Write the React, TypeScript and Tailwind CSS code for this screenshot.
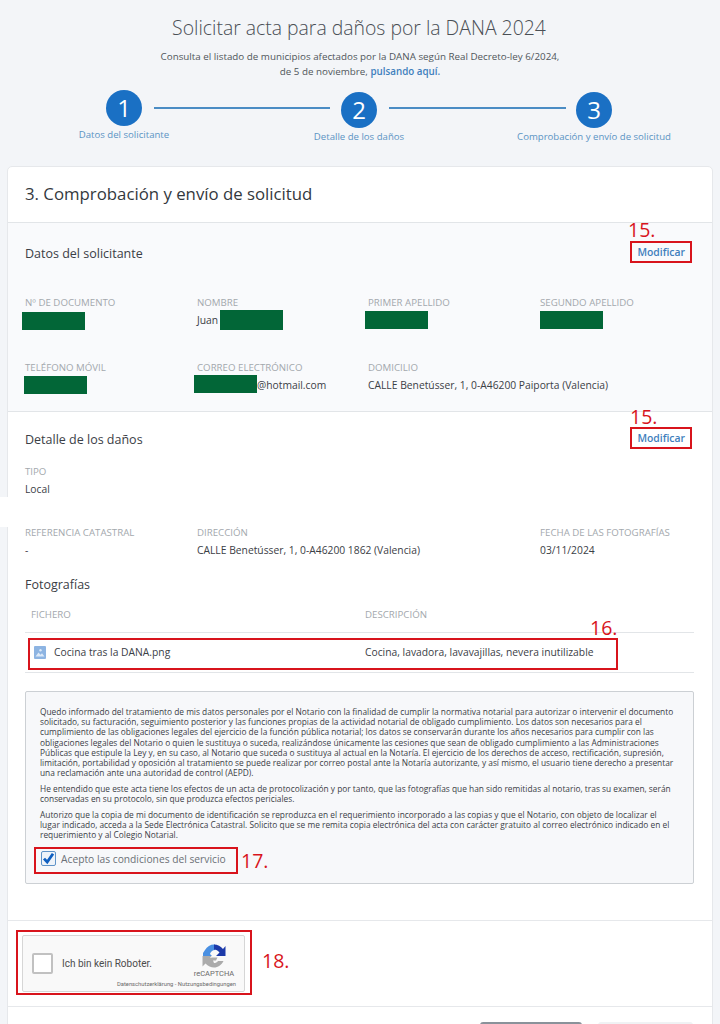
import React from "react";

const L = ({ children }: { children: React.ReactNode }) => (
  <div className="text-[9.7px] leading-[12px] font-medium uppercase text-[#a3a8ad] whitespace-nowrap">{children}</div>
);
const V = ({ children }: { children?: React.ReactNode }) => (
  <div className="mt-[4px] text-[10.3px] leading-[14px] text-[#3b4046] whitespace-nowrap h-[14px]">{children}</div>
);
const F = ({ l, v }: { l: string; v?: React.ReactNode }) => (
  <div>
    <L>{l}</L>
    <V>{v}</V>
  </div>
);

const Step = ({ n, label, up }: { n: number; label: string; up?: boolean }) => (
  <div className={`flex flex-col items-center w-[180px] ${up ? "" : "mt-[2px]"}`}>
    <div className="w-9 h-9 rounded-full bg-[#1a70c4] text-white flex items-center justify-center text-[24px]">{n}</div>
    <div className="mt-[2px] text-[9.6px] leading-[14px] text-[#5b94c4] whitespace-nowrap">{label}</div>
  </div>
);

const Box = ({ c }: { c: string }) => <div className={`absolute border-2 border-[#d8141c] ${c}`} />;
const Num = ({ c, t }: { c: string; t: string }) => (
  <div className={`absolute text-[#d8141c] leading-none text-[19.5px] ${c}`}>{t}</div>
);
const G = ({ c }: { c: string }) => <div className={`absolute bg-[#026637] w-[63px] h-[18px] ${c}`} />;

const p1 = [
  "Quedo informado del tratamiento de mis datos personales por el Notario con la finalidad de cumplir la normativa notarial para autorizar o intervenir el documento",
  "solicitado, su facturación, seguimiento posterior y las funciones propias de la actividad notarial de obligado cumplimiento. Los datos son necesarios para el",
  "cumplimiento de las obligaciones legales del ejercicio de la función pública notarial; los datos se conservarán durante los años necesarios para cumplir con las",
  "obligaciones legales del Notario o quien le sustituya o suceda, realizándose únicamente las cesiones que sean de obligado cumplimiento a las Administraciones",
  "Públicas que estipule la Ley y, en su caso, al Notario que suceda o sustituya al actual en la Notaría. El ejercicio de los derechos de acceso, rectificación, supresión,",
  "limitación, portabilidad y oposición al tratamiento se puede realizar por correo postal ante la Notaría autorizante, y así mismo, el usuario tiene derecho a presentar",
  "una reclamación ante una autoridad de control (AEPD).",
];
const p2 = [
  "He entendido que este acta tiene los efectos de un acta de protocolización y por tanto, que las fotografías que han sido remitidas al notario, tras su examen, serán",
  "conservadas en su protocolo, sin que produzca efectos periciales.",
];
const p3 = [
  "Autorizo que la copia de mi documento de identificación se reproduzca en el requerimiento incorporado a las copias y que el Notario, con objeto de localizar el",
  "lugar indicado, acceda a la Sede Electrónica Catastral. Solicito que se me remita copia electrónica del acta con carácter gratuito al correo electrónico indicado en el",
  "requerimiento y al Colegio Notarial.",
];
const Para = ({ lines, c }: { lines: string[]; c?: string }) => (
  <div className={c}>
    {lines.map((t) => (
      <div key={t} className="whitespace-nowrap">{t}</div>
    ))}
  </div>
);

export default function App() {
  return (
    <div className="relative h-[1024px] w-[720px] overflow-hidden bg-[#f3f5f8] font-['Open_Sans',sans-serif]">
      <div className="h-[166px] flex flex-col items-center">
        <h1 className="mt-[14px] text-[19.4px] leading-[27px] font-light text-[#4a4f55] -ml-[2px]">Solicitar acta para daños por la DANA 2024</h1>
        <p className="mt-[9px] text-[9.8px] leading-[14.5px] text-[#50555b] text-center">
          Consulta el listado de municipios afectados por la DANA según Real Decreto-ley 6/2024,
          <br />
          de 5 de noviembre, <span className="font-semibold text-[#3f7fbd]">pulsando aquí.</span>
        </p>
        <div className="mt-[11px] w-[720px] flex items-start pl-[34px]">
          <Step n={1} label="Datos del solicitante" up />
          <div className="mt-[17px] h-[2px] w-[176px] bg-[#4a8cc4] -ml-[60px] shrink-0" />
          <div className="-ml-[61px]"><Step n={2} label="Detalle de los daños" /></div>
          <div className="mt-[17px] h-[2px] w-[177px] bg-[#4a8cc4] -ml-[60px] shrink-0" />
          <div className="-ml-[62px]"><Step n={3} label="Comprobación y envío de solicitud" /></div>
        </div>
      </div>

      <div className="ml-[7px] w-[706px] bg-white border border-[#e6e8eb] rounded-t-[5px] h-[900px]">
        <div className="h-[56px] flex items-center pl-[17px] border-b border-[#e2e5e8]">
          <h2 className="text-[16.8px] text-[#33383d] leading-none">3. Comprobación y envío de solicitud</h2>
        </div>

        <section className="h-[189px] bg-[#f9fafc] border-b border-[#e2e5e8] pl-[17px] pr-[27px]">
          <div className="flex justify-between items-center pt-[22px]">
            <h3 className="text-[12.5px] leading-[17px] text-[#3b4046]">Datos del solicitante</h3>
            <a className="text-[10.4px] font-semibold text-[#3f7fbd] leading-[14px] -mt-[3px]">Modificar</a>
          </div>
          <div className="mt-[35px] grid grid-cols-[172px_171px_172px_1fr]">
            <F l="Nº de documento" />
            <F l="Nombre" v="Juan" />
            <F l="Primer apellido" />
            <F l="Segundo apellido" />
          </div>
          <div className="mt-[35px] grid grid-cols-[172px_171px_1fr]">
            <F l="Teléfono móvil" />
            <F l="Correo electrónico" v={<span className="pl-[60px]">@hotmail.com</span>} />
            <F l="Domicilio" v="CALLE Benetússer, 1, 0-A46200 Paiporta (Valencia)" />
          </div>
        </section>

        <section className="pl-[17px] pr-[18px]">
          <div className="flex justify-between items-center pt-[19px] pr-[9px]">
            <h3 className="text-[12.5px] leading-[17px] text-[#3b4046]">Detalle de los daños</h3>
            <a className="text-[10.4px] font-semibold text-[#3f7fbd] leading-[14px] -mt-[3px]">Modificar</a>
          </div>
          <div className="mt-[18px]">
            <F l="Tipo" v="Local" />
          </div>
          <div className="mt-[31px] grid grid-cols-[172px_343px_1fr]">
            <F l="Referencia catastral" v="-" />
            <F l="Dirección" v="CALLE Benetússer, 1, 0-A46200 1862 (Valencia)" />
            <F l="Fecha de las fotografías" v="03/11/2024" />
          </div>
          <h3 className="mt-[19px] text-[12.5px] leading-[17px] text-[#3b4046]">Fotografías</h3>
          <div className="mt-[16px] h-[24px] grid grid-cols-[334px_1fr] pl-[6px] border-b border-[#e2e5e8]">
            <L>Fichero</L>
            <L>Descripción</L>
          </div>
          <div className="h-[40px] grid grid-cols-[334px_1fr] items-center pl-[6px] border-b border-[#e2e5e8] text-[10.3px] text-[#3b4046]">
            <div className="flex items-center gap-[8px] pl-[3px]">
              <svg width="12" height="13" viewBox="0 0 12 13" className="shrink-0">
                <rect width="12" height="13" rx="1" fill="#8db4e2" />
                <path d="M1.5 10.5 L4.5 6.5 L6.5 8.8 L8 7.3 L10.5 10.5 Z" fill="#dce9f8" />
                <circle cx="6.5" cy="4.2" r="1.2" fill="#dce9f8" />
              </svg>
              <span>Cocina tras la DANA.png</span>
            </div>
            <div className="whitespace-nowrap">Cocina, lavadora, lavavajillas, nevera inutilizable</div>
          </div>

          <div className="mt-[18px] h-[193px] bg-[#f7f8fa] border border-[#ccd0d4] rounded-[2px] pl-[14px] pt-[15px] text-[8.35px] leading-[10.2px] text-[#3b4046]">
            <Para lines={p1} />
            <Para lines={p2} c="mt-[5.5px]" />
            <Para lines={p3} c="mt-[5.5px]" />
            <label className="mt-[11px] flex items-center gap-[5px] pl-[1px]">
              <span className="w-[15px] h-[15px] rounded-[2px] bg-[#eef3f9] border border-[#5f93c8] flex items-center justify-center shrink-0">
                <svg width="13" height="13" viewBox="0 0 13 13"><path d="M2 6.6 L5.2 10 L11 1.8" stroke="#0f5fc0" strokeWidth="2.8" fill="none" /></svg>
              </span>
              <span className="text-[10.25px] leading-[14px] text-[#6b7076]">Acepto las condiciones del servicio</span>
            </label>
          </div>
        </section>

        <div className="mt-[36px] h-[87px] border-t border-b border-[#e6e8eb] pl-[14px] pt-[14px]">
          <div className="relative w-[223px] h-[57px] bg-[#f9f9f9] border border-[#d6d6d6] rounded-[2px] flex items-center pl-[9px]">
            <div className="w-[21px] h-[21px] bg-white border-2 border-[#c1c1c1] rounded-[2px]" />
            <div className="ml-[9px] text-[10px] text-[#4c4c4c] font-['Roboto',sans-serif]">Ich bin kein Roboter.</div>
            <div className="absolute right-[8px] top-[8px] flex flex-col items-center w-[44px]">
              <svg width="24" height="24" viewBox="0 0 24 24">
                <path d="M3 6 C5 2.5 8.5 0.5 12 0.5 L13 0.5 L13 6 C10.5 6 8.5 8 8 10 L10 12 L1 12 L1 9 Z" fill="#4a90e2" />
                <path d="M12 0.5 C15.5 0.5 19 2.5 21 5 L23.5 2 V12 H14 L17.5 8.5 C16 6.5 14 5.5 12 5.5 Z" fill="#1c3aa9" />
                <path d="M0.5 12 V22.5 L3.5 19.5 C6 22 9 23.5 12 23.5 C16 23.5 19.5 21 21.5 17 H16 C15 18.5 13.5 19 12 19 L11 16.5 H14 L15.5 13.5 H10 L8 14 L9.5 12 Z" fill="#ababab" />
              </svg>
              <div className="text-[7.5px] leading-[9px] text-[#6a6a6a] font-['Roboto',sans-serif] mt-[1px]">reCAPTCHA</div>
            </div>
            <div className="absolute right-[8px] bottom-[3px] text-[5.8px] leading-[7px] text-[#6a6a6a] whitespace-nowrap font-['Roboto',sans-serif]">Datenschutzerklärung - Nutzungsbedingungen</div>
          </div>
        </div>

        <div className="flex justify-end pr-[19px] pt-[15px] gap-[16px]">
          <div className="w-[102px] h-[30px] bg-[#8a929a] rounded-[3px]" />
          <div className="w-[95px] h-[30px] bg-[#f0f2f4] rounded-[3px]" />
        </div>
      </div>

      <div className="absolute left-0 top-[497px] w-[8px] h-[30px] bg-white" />
      <G c="left-[22px] top-[312px]" />
      <G c="left-[220px] top-[310px] h-[20px]" />
      <G c="left-[365px] top-[311px]" />
      <G c="left-[540px] top-[311px]" />
      <G c="left-[24px] top-[376px]" />
      <G c="left-[194px] top-[375px]" />

      <Box c="left-[630px] top-[241px] w-[62px] h-[22px]" />
      <Box c="left-[630px] top-[427px] w-[62px] h-[22px]" />
      <Box c="left-[28px] top-[638px] w-[590px] h-[32px]" />
      <Box c="left-[34px] top-[847px] w-[204px] h-[27px]" />
      <Box c="left-[16px] top-[930px] w-[236px] h-[65px]" />
      <Num c="left-[628px] top-[220px]" t="15." />
      <Num c="left-[630px] top-[407px]" t="15." />
      <Num c="left-[590px] top-[618px]" t="16." />
      <Num c="left-[241px] top-[851px]" t="17." />
      <Num c="left-[262px] top-[951px]" t="18." />
    </div>
  );
}
